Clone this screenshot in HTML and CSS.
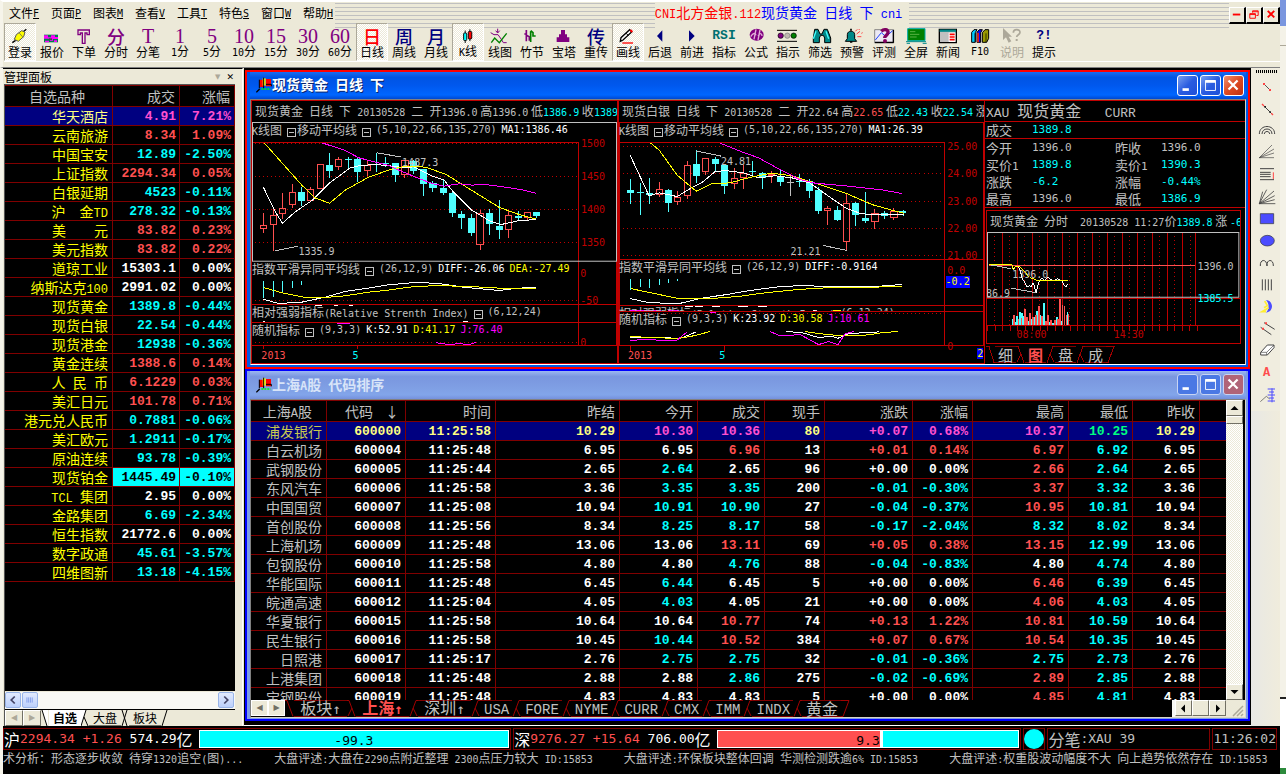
FILE: index.html
```html
<!DOCTYPE html>
<html lang="zh-CN">
<head>
<meta charset="utf-8">
<title>CNI北方金银.112现货黄金 日线 下</title>
<link rel="stylesheet" href="styles.css">
</head>
<body>
<div class="app">
<header class="top">
  <div class="menubar">
    <nav class="menus">
      <button>文件<u>F</u></button><button>页面<u>P</u></button><button>图表<u>M</u></button><button>查看<u>V</u></button><button>工具<u>T</u></button><button>特色<u>S</u></button><button>窗口<u>W</u></button><button>帮助<u>H</u></button>
    </nav>
    <div class="stripes"></div>
    <h1 class="caption"><span class="hot"><span class="n">CNI</span>北方金银<span class="n">.112</span></span>现货黄金<span class="n">&nbsp;</span>日线<span class="n">&nbsp;</span>下<span class="n">&nbsp;cni</span></h1>
    <div class="stripes"></div>
    <div class="childbtns">
      <button aria-label="最小化"><svg viewBox="0 0 15 15"><path d="M3 7h8" stroke="#f00" stroke-width="2"/></svg></button>
      <button aria-label="还原"><svg viewBox="0 0 15 15"><path d="M6 3h6v5h-2M6 3v2M3 6h6v5H3zM3 7h6M6 4h6" fill="none" stroke="#f00"/></svg></button>
      <button aria-label="关闭"><svg viewBox="0 0 15 15"><path d="M4 3l7 7M11 3l-7 7" stroke="#f00" stroke-width="2"/></svg></button>
    </div>
  </div>
  <div class="toolbar">
    <button class="on"><svg viewBox="27 84 72 48"><path d="M40 128l10-7M72 96l10-8" stroke="#000" stroke-width="4"/><path d="M46 118l6-14 16-12 10 4-4 14-16 14z" fill="#ff0" stroke="#555" stroke-width="3"/><path d="M60 98l12 14" stroke="#884" stroke-width="3"/></svg>登录</button>
    <button><svg viewBox="120 82 72 48"><path d="M132 102h42v23h-42z" fill="#00804a"/><path d="M132 104h12v6h9v-6h12v5h9v6h-15v5h-9v-6h-18zM135 120h12v5h-12zM162 119h9v5h-9z" fill="#f0f"/><path d="M147 113h9v5h-9z" fill="#444"/></svg>报价</button>
    <button><svg viewBox="214 82 72 48"><path d="M232 88h34v14h-7v-5h-6v31h-8V97h-6v5h-7z" fill="none" stroke="#800080" stroke-width="4"/></svg>下单</button>
    <button><b class="zi">分</b>分时</button>
    <button><b class="nu">T</b>分笔</button>
    <button><b class="nu">1</b><span><span class="n">1</span>分</span></button>
    <button><b class="nu">5</b><span><span class="n">5</span>分</span></button>
    <button><b class="nu">10</b><span><span class="n">10</span>分</span></button>
    <button><b class="nu">15</b><span><span class="n">15</span>分</span></button>
    <button><b class="nu">30</b><span><span class="n">30</span>分</span></button>
    <button><b class="nu">60</b><span><span class="n">60</span>分</span></button>
    <button class="on"><b class="zi hot">日</b>日线</button>
    <button><b class="zi navy">周</b>周线</button>
    <button><b class="zi navy">月</b>月线</button>
    <button class="on"><svg viewBox="81 84 72 48"><path d="M108 92v40M123 88v38" stroke="#000" stroke-width="3"/><rect x="103" y="100" width="10" height="24" rx="3" fill="#0ff" stroke="#000" stroke-width="3"/><rect x="118" y="95" width="11" height="24" rx="3" fill="#f00" stroke="#000" stroke-width="3"/></svg><span><span class="n">K</span>线</span></button>
    <button><svg viewBox="174 82 72 48"><path d="M182 96l10 6 12 0 10 14 6 10h10" fill="none" stroke="#800080" stroke-width="3"/><path d="M184 126l10-14 14 14 22-28" fill="none" stroke="#008000" stroke-width="4"/><path d="M203 84v12M197 90l6 7 6-7" fill="none" stroke="#800080" stroke-width="3"/></svg>线图</button>
    <button><svg viewBox="270 82 72 48"><path d="M289 88v34M283 100h6M289 104l9 4v12" fill="none" stroke="#800080" stroke-width="5"/><path d="M302 92v32M302 90l7 6v10h8" fill="none" stroke="#008000" stroke-width="5"/></svg>竹节</button>
    <button><svg viewBox="366 82 72 48"><path d="M393 88h12v13h6v9h7v14h-38v-14h7v-9h6z" fill="#800080"/></svg>宝塔</button>
    <button><b class="zi navy">传</b>重传</button>
    <button class="on"><svg viewBox="561 84 72 48"><path d="M574 124l8-4 26-24-6-7-26 24z" fill="#fff" stroke="#000" stroke-width="4"/><path d="M604 90l6 6" stroke="#f00" stroke-width="6"/><path d="M592 100l6 7" stroke="#000" stroke-width="3"/><path d="M580 129h32" stroke="#f00" stroke-width="4"/></svg>画线</button>
    <button><svg viewBox="652 82 72 48"><path d="M695 89v34l-16-17z" fill="#000080"/></svg>后退</button>
    <button><svg viewBox="748 82 72 48"><path d="M775 89v34l17-17z" fill="#000080"/></svg>前进</button>
    <button><b class="rsi">RSI</b>指标</button>
    <button><svg viewBox="942 82 72 48"><ellipse cx="980" cy="102" rx="21" ry="18" fill="#800080"/><path d="M972 116l6-30M984 118l6-30M962 108c8-14 14-10 16-4M984 106c8-12 12-6 12 0" fill="none" stroke="#e0b0d8" stroke-width="4"/></svg>公式</button>
    <button><svg viewBox="1038 82 72 48"><path d="M1041 89h60M1041 122h60" stroke="#000" stroke-width="3"/><circle cx="1052" cy="105" r="8" fill="#800080" stroke="#000" stroke-width="2"/><circle cx="1072" cy="105" r="8" fill="#c0b8b0" stroke="#777" stroke-width="2"/><circle cx="1091" cy="105" r="8" fill="#008000" stroke="#000" stroke-width="2"/></svg>指示</button>
    <button><svg viewBox="1136 82 72 48"><path d="M1156 86h10l6 14h6l6-14h10l10 26v14h-18v-14l-4-8h-8l-4 8v14h-18v-14z" fill="#088" stroke="#000" stroke-width="3"/><path d="M1160 92l-8 22M1190 92l8 22" stroke="#4ff" stroke-width="4"/></svg>筛选</button>
    <button><svg viewBox="1232 82 72 48"><path d="M1248 122h34l-6-8v-12c0-14-22-14-22 0v12z" fill="#088" stroke="#000" stroke-width="3"/><path d="M1265 84v6M1262 124h7" stroke="#000" stroke-width="5"/><path d="M1278 92l6-6M1282 100l10-8M1284 108h12M1288 88l3-3M1296 98l4-2" stroke="#f44" stroke-width="3"/></svg>预警</button>
    <button><svg viewBox="38 82 72 48"><path d="M46 87h57v40H46z" fill="#ece9f4" stroke="#555" stroke-width="2"/><path d="M47 125h55M102 88v38" stroke="#000" stroke-width="4"/><path d="M48 118l18-22 14 12 20-18" fill="none" stroke="#24f" stroke-width="3"/><path d="M66 92c8-8 22-6 20 4s-10 8-10 16" fill="none" stroke="#800060" stroke-width="10"/><circle cx="77" cy="121" r="6" fill="#800060"/></svg>评测</button>
    <button><svg viewBox="132 82 72 48"><path d="M143 84h52v36h-52z" fill="#008000" stroke="#0aa" stroke-width="3"/><path d="M150 93h16M150 101h28M150 109h20" stroke="#8c6" stroke-width="2"/><path d="M138 123h60M150 128h-10M188 128h12" stroke="#088" stroke-width="3"/></svg>全屏</button>
    <button><svg viewBox="226 82 72 48"><path d="M236 86h51v40h-51z" fill="#c0c0c0" stroke="#000" stroke-width="4"/><path d="M237 90h49" stroke="#088" stroke-width="7"/><path d="M264 96h20v28h-20z" fill="#fff"/><path d="M267 101h15M267 109h15M267 117h15" stroke="#f00" stroke-width="5"/></svg>新闻</button>
    <button><svg viewBox="324 82 72 48"><path d="M335 95l7-8h9l-5 9v29h-11z" fill="#0cf" stroke="#000" stroke-width="3"/><path d="M351 95l7-8h9l-5 9v29h-11z" fill="#00f" stroke="#000" stroke-width="3"/><path d="M351 96h6v29h-6z" fill="#c22"/><path d="M367 96l8-9h11v26l-6 12h-13z" fill="#990" stroke="#000" stroke-width="3"/><path d="M378 98v26M345 98v26" stroke="#000" stroke-width="2"/></svg><span class="n">F10</span></button>
    <button disabled><svg viewBox="418 82 72 48"><path d="M427 82v36l9-8 8 16 8-4-8-14h10z" fill="#aca899"/><path d="M458 96c0-12 20-12 20-1 0 8-9 6-10 14" fill="none" stroke="#aca899" stroke-width="5"/><path d="M465 115h6v6h-6z" fill="#aca899"/></svg>说明</button>
    <button><b class="rsi navy">?!</b>提示</button>
  </div>
</header>

<main class="work">
<aside class="panel">
  <div class="panelhead"><h2>管理面板</h2><button class="drop" aria-label="菜单">▼</button><button aria-label="关闭">✕</button></div>
  <div class="watchbox">
  <div class="scrollpane">
  <table class="grid watch">
    <thead><tr><th>自选品种</th><th>成交</th><th>涨幅</th></tr></thead>
    <tbody>
    <tr class="sel m"><td>华天酒店</td><td>4.91</td><td>7.21%</td></tr>
    <tr class="r"><td>云南旅游</td><td>8.34</td><td>1.09%</td></tr>
    <tr class="c"><td>中国宝安</td><td>12.89</td><td>-2.50%</td></tr>
    <tr class="r"><td>上证指数</td><td>2294.34</td><td>0.05%</td></tr>
    <tr class="c"><td>白银延期</td><td>4523</td><td>-0.11%</td></tr>
    <tr class="c"><td>沪　金<span class="n">TD</span></td><td>278.32</td><td>-0.13%</td></tr>
    <tr class="r"><td>美　　元</td><td>83.82</td><td>0.23%</td></tr>
    <tr class="r"><td>美元指数</td><td>83.82</td><td>0.22%</td></tr>
    <tr><td>道琼工业</td><td>15303.1</td><td>0.00%</td></tr>
    <tr><td>纳斯达克<span class="n">100</span></td><td>2991.02</td><td>0.00%</td></tr>
    <tr class="c"><td>现货黄金</td><td>1389.8</td><td>-0.44%</td></tr>
    <tr class="c"><td>现货白银</td><td>22.54</td><td>-0.44%</td></tr>
    <tr class="c"><td>现货港金</td><td>12938</td><td>-0.36%</td></tr>
    <tr class="r"><td>黄金连续</td><td>1388.6</td><td>0.14%</td></tr>
    <tr class="r"><td>人<span class="n">&nbsp;</span>民<span class="n">&nbsp;</span>币</td><td>6.1229</td><td>0.03%</td></tr>
    <tr class="r"><td>美汇日元</td><td>101.78</td><td>0.71%</td></tr>
    <tr class="c"><td>港元兑人民币</td><td>0.7881</td><td>-0.06%</td></tr>
    <tr class="c"><td>美汇欧元</td><td>1.2911</td><td>-0.17%</td></tr>
    <tr class="c"><td>原油连续</td><td>93.78</td><td>-0.39%</td></tr>
    <tr class="flash"><td>现货铂金</td><td>1445.49</td><td>-0.10%</td></tr>
    <tr><td><span class="n">TCL&nbsp;</span>集团</td><td>2.95</td><td>0.00%</td></tr>
    <tr class="c"><td>金路集团</td><td>6.69</td><td>-2.34%</td></tr>
    <tr><td>恒生指数</td><td>21772.6</td><td>0.00%</td></tr>
    <tr class="c"><td>数字政通</td><td>45.61</td><td>-3.57%</td></tr>
    <tr class="c"><td>四维图新</td><td>13.18</td><td>-4.15%</td></tr>
    </tbody>
  </table>
  </div>
  <div class="xpscroll"><button aria-label="左"><svg viewBox="0 0 16 16"><path d="M10 4L6 8l4 4" fill="none" stroke="#446" stroke-width="2"/></svg></button><button class="thumb" aria-label="滑块"><svg viewBox="0 0 16 16"><path d="M4.500 5v6M6.500 5v6M8.500 5v6M10.500 5v6" stroke="#7c98e8"/></svg></button><button class="last" aria-label="右"><svg viewBox="0 0 16 16"><path d="M6 4l4 4-4 4" fill="none" stroke="#446" stroke-width="2"/></svg></button></div>
  <div class="ptabs"><button class="arrow" aria-label="前">◀</button><button class="arrow" aria-label="后">▶</button><svg viewBox="0 0 6 16"><path d="M0 0h6v16H5z" fill="#fff"/><path d="M0 0l5 16" stroke="#000"/></svg><button class="tab on">自选</button><svg viewBox="0 0 8 16"><path d="M0 0h5L0 16z" fill="#fff"/><path d="M5 0L0 16M3 7l4 9" stroke="#000"/></svg><button class="tab">大盘</button><svg viewBox="0 0 8 16"><path d="M6 0L1 16M1 0l5 16" stroke="#000"/></svg><button class="tab">板块</button><svg viewBox="0 0 8 16"><path d="M6 0L1 16" stroke="#000"/></svg></div>
  </div>
</aside>

<section class="mdi">
<article class="win active">
  <div class="titlebar"><svg class="logo" viewBox="18 24 48 48"><path d="M28 32h14v22H28zM48 30h15v22H48z" fill="#f00"/><path d="M38 28h9v22h-9z" fill="#ff0"/><path d="M41 26v32M28 32v26M48 46h16v6" stroke="#000" stroke-width="3" fill="none"/><path d="M34 60h28" stroke="#0f0" stroke-width="5" stroke-dasharray="6 3"/><path d="M19 70l10-10" stroke="#000" stroke-width="4"/></svg><h2>现货黄金&ensp;日线&ensp;下</h2>
    <button class="wb" aria-label="最小化"><svg viewBox="0 0 21 21"><path d="M5 15h7" stroke="#fff" stroke-width="3"/></svg></button><button class="wb" aria-label="最大化"><svg viewBox="0 0 21 21"><path d="M5 5h11v11H5z" fill="none" stroke="#fff"/><path d="M5 6h11" stroke="#fff" stroke-width="3"/></svg></button><button class="wb close" aria-label="关闭"><svg viewBox="0 0 21 21"><path d="M5 5l10 10M15 5L5 15" stroke="#fff" stroke-width="2.500"/></svg></button></div>
  <div class="client charts">
    <section class="chart gold">
      <p class="chead"><span class="z">现货黄金</span> <span class="z">日线</span> <span class="z">下</span> 20130528 <span class="z">二</span> <span class="z">开</span>1396.0<span class="z"> 高</span>1396.0<span class="z"> 低</span><span class="ct">1386.9</span><span class="z"> 收</span><span class="ct">1389.8</span></p>
      <div class="plot">
        <svg viewBox="21 163 1092 720" preserveAspectRatio="xMinYMin meet">
          <g class="axis"><path d="M21 224.500H998V832M21 709.500H1112M21 763.500H1112M21 832.500H1112V163M55.500 832v10M337.500 832v10"/><path class="dots" d="M30 227.500H1000M30 325.500H1000M30 425.500H1000M30 523.500H1000M30 697.500H1000M30 823.500H1000"/></g>
          <rect x="22.500" y="164.500" width="1089" height="415" fill="none" stroke="#c0c0c0" stroke-width="3"/>
          <g class="lab"><text x="1005" y="238">1500</text><text x="1005" y="337">1450</text><text x="1005" y="436">1400</text><text x="1005" y="534">1350</text><text x="1003" y="627">0</text><text x="1003" y="708">-50</text><text x="1003" y="834">0</text></g>
          <g class="up"><path d="M55.500 435v37M55.500 482v13M85.500 422v20M85.500 469v81M112.500 376v45M112.500 436v17M142.500 348v25M142.500 409v11M196.500 358v6M280.500 267v8M280.500 296v12M367.500 278v15M367.500 307v19M478.500 320v10M703.500 426v12M703.500 529v17M787.500 430v14M787.500 486v24M844.500 450v8"/><path d="M46 472h19v10H46zM76 442h19v27H76zM103 421h19v15H103zM133 373h19v36H133zM187 364h19v34H187zM217 289h19v72H217zM271 275h19v21H271zM358 293h19v14H358zM469 277h19v43H469zM694 438h19v91H694zM778 444h19v42H778zM835 433h19v17H835z"/></g>
          <g class="down"><path d="M169.500 358v56M253.500 255v75M310.500 267v36M337.500 268v74M394.500 255v57M421.500 267v30M451.500 285v57M505.500 276v42M535.500 303v81M562.500 340v32M592.500 336v45M619.500 370v77M646.500 430v53M676.500 438v66M730.500 423v78M760.500 396v117M817.500 430v28M871.500 432v18"/><path class="f" d="M159 373h21v26H159zM243 291h21v18H243zM300 273h21v3H300zM327 273h21v39H327zM384 289h21v4H384zM411 285h21v3H411zM441 285h21v36H441zM495 279h21v30H495zM525 305h21v43H525zM552 345h21v15H552zM582 360h21v15H582zM609 375h21v60H609zM636 438h21v12H636zM666 450h21v45H666zM720 435h21v33H720zM750 474h21v12H750zM807 444h21v5H807zM861 432h21v12H861z"/></g>
          <g class="note"><path d="M394 255l74 13M90 548l68-13"/><text x="470" y="296">1487.3</text><text x="160" y="562">1335.9</text></g>
          <g class="lw"><path d="M55 358l35 72 22 36 38-34 50-34 53-53 28-20 34-25 35-8 50-1 40 4 40 5 25-3 55 28 35 11 25 32 56 57 54 33 35 12 55-12 50-3M55 693l45 13 70-4 70-15 60-17 70-10 60-10 70-6 70 1 90 13 100 9 60-7 50-2M210 712h20M265 712h12M312 712h10M55 760h6M652 760h16"/></g>
          <g class="ly"><path d="M58 226l112 126 40 38 43 16 47-39 70-39 60-21 50-12 60 3 60 21 76 47 84 52 60 22 50 13M55 658l55 16 70 14h60l60-5 70-11 60-6 60-9 70-4 90 1 110 6 110 1"/></g>
          <g class="lm"><path d="M232 226l68 22 40 22 90 23 30 14 60 25 40 15 35 8 45-7 40 4 30-3 70 9 50 8 40 10M276 766h38M570 823l40 6 30-3 30 3 20-6"/></g>
          <path class="bars" d="M55.500 639v51M85.500 639v48M112.500 639v33M142.500 639v21M169.500 639v12"/>
          <text class="yr" x="49" y="872">2013</text><text class="mo" x="322" y="872">5</text>
        </svg>
        <div class="legends">
          <p><span>K<span class="z">线图</span></span><button class="fold" aria-label="折叠"></button><span class="z">移动平均线</span><button class="fold" aria-label="折叠"></button><span>(5,10,22,66,135,270)</span><span class="wt">MA1:1386.46</span></p>
          <p><span class="z">指数平滑异同平均线</span><button class="fold" aria-label="折叠"></button><span>(26,12,9)</span><span class="wt">DIFF:-26.06</span><span class="yt">DEA:-27.49</span></p>
          <p><span><span class="z">相对强弱指标</span>(Relative Strenth Index)</span><button class="fold" aria-label="折叠"></button><span>(6,12,24)</span></p>
          <p><span class="z">随机指标</span><button class="fold" aria-label="折叠"></button><span>(9,3,3)</span><span class="wt">K:52.91</span><span class="yt">D:41.17</span><span class="mt">J:76.40</span></p>
        </div>
      </div>
    </section>
    <section class="chart silver">
      <p class="chead"><span class="z">现货白银</span> <span class="z">日线</span> <span class="z">下</span> 20130528 <span class="z">二</span> <span class="z">开</span>22.64<span class="z"> 高</span><span class="rt">22.65</span><span class="z"> 低</span><span class="ct">22.43</span><span class="z"> 收</span><span class="ct">22.54</span><span class="z"> 涨</span></p>
      <div class="plot">
        <svg viewBox="13 163 1092 720" preserveAspectRatio="xMinYMin meet">
          <g class="lab"><text x="995" y="247">25.00</text><text x="995" y="328">24.00</text><text x="995" y="412">23.00</text><text x="995" y="493">22.00</text><text x="995" y="574">21.00</text><text x="995" y="617">0.0</text><text x="995" y="845">0</text></g>
          <g class="axis"><path d="M14.500 163V832M13 164.500H1103M13 224.500H988V832M13 574.500H1103M13 712.500H1103M13 730.500H1103M13 832.500H1103V163M46.500 832v18M328.500 832v18"/><path class="dots" d="M24 236.500H990M24 317.500H990M24 401.500H990M24 481.500H990M24 562.500H990M24 734.500H990"/></g>
          <path d="M990 625h72v34h-72zM1085 838h18v34h-18z" fill="#00f"/><text x="990" y="652" fill="#ff0">-0.2</text><text x="1085" y="866" fill="#ff0">2</text>
          <g class="up"><path d="M133.500 342v24M133.500 379v8M187.500 369v19M187.500 401v10M217.500 281v11M217.500 383v9M271.500 311v12M358.500 300v31M358.500 347v15M385.500 291v25M385.500 328v34M469.500 309v36M637.500 414v7M637.500 428v42M694.500 376v30M694.500 520v27M778.500 423v14M778.500 461v22M835.500 420v10M835.500 449v6"/><path d="M124 366h19v13H124zM178 388h19v13H178zM208 292h19v91H208zM262 271h19v40H262zM349 331h19v16H349zM376 316h19v12H376zM460 321h19v3H460zM628 421h19v7H628zM685 406h19v114H685zM769 437h19v24H769zM826 430h19v19H826z"/></g>
          <g class="down"><path d="M46.500 334v74M76.500 345v95M103.500 330v78M160.500 363v69M244.500 248v97M301.500 268v44M328.500 288v90M412.500 279v48M442.500 312v50M496.500 303v51M553.500 318v39M583.500 335v55M610.500 357v81M667.500 414v45M721.500 402v72M751.500 372v93M808.500 430v23M865.500 426v18"/><path class="f" d="M36 366h21v9H36zM66 372h21v3H66zM93 375h21v6H93zM150 366h21v39H150zM234 288h21v36H234zM291 273h21v15H291zM318 291h21v63H318zM402 309h21v5H402zM432 315h21v15H432zM486 325h21v17H486zM543 340h21v4H543zM573 340h21v29H573zM600 366h21v63H600zM657 426h21v30H657zM711 405h21v36H711zM741 450h21v9H741zM798 436h21v7H798zM852 429h21v5H852z"/></g>
          <g class="note"><path d="M526.500 318v66M516 343.500h21M244 250l74 15M622 532l72 15"/><text x="318" y="293">24.81</text><text x="526" y="560">21.21</text></g>
          <g class="lw"><path d="M46 262l57 122 30-9 54 11 43-26 30-15 40-33 30-4 55 7 45 15 50-6 50 6 53 15 57 40 54 37 46 16 90 3 35-1M46 691l54 12 90 4 70-17 70-10 70-12 80-11 80-5 90 4h120l90-7M210 715h24M240 715h25M292 715h24M370 715h30M428 715h28M46 808h104l45 3 49-20M513 790l47 3 50 15 40-4 18 6 32-14 90-5M592 727h12"/></g>
          <g class="ly"><path d="M108 226l25 21 54 75 57 48 46-22 55-3 55-15 70-14 60 8 70 22 94 31 76 33 60 17 35 9M46 661l144 30h100l80-6 80-11 100-10 100-6 210-2M46 805l54 2 90 4 50-9 45-12M570 790l50 7 60 6 80-3 40-7 48-3M652 727h24"/></g>
          <g class="lm"><path d="M315 226l70 28 45 16 66 36 57 29 47 11 100 9 100 11 60 11M46 727h92M160 727h34M285 733h18M46 817l34-3 105 3 33-27M466 790l29 13 60-4 55 30 30-9 28 9 22-33 25-6"/></g>
          <path class="bars" d="M46.500 633v32M76.500 633v24M103.500 633v27M133.500 633v18M160.500 633v12M187.500 633v5"/>
          <text class="yr" x="40" y="872">2013</text><text class="mo" x="313" y="872">5</text>
        </svg>
        <div class="legends">
          <p><span>K<span class="z">线图</span></span><button class="fold" aria-label="折叠"></button><span class="z">移动平均线</span><button class="fold" aria-label="折叠"></button><span>(5,10,22,66,135,270)</span><span class="wt">MA1:26.39</span></p>
          <p><span class="z">指数平滑异同平均线</span><button class="fold" aria-label="折叠"></button><span>(26,12,9)</span><span class="wt">DIFF:-0.9164</span></p>
          <p class="cut"><span><span class="z">相对强弱指标</span>(Relative Strenth Index)</span><span>(6,12,24)</span></p>
          <p><span class="z">随机指标</span><button class="fold" aria-label="折叠"></button><span>(9,3,3)</span><span class="wt">K:23.92</span><span class="yt">D:30.58</span><span class="mt">J:10.61</span></p>
        </div>
      </div>
    </section>
    <section class="quote">
      <h3><span class="n">XAU </span>现货黄金<span class="n">&nbsp;&nbsp; CURR</span></h3>
      <dl class="deal"><dt>成交</dt><dd class="ct">1389.8</dd></dl>
      <dl><dt>今开</dt><dd>1396.0</dd><dt>昨收</dt><dd>1396.0</dd><dt>买价<span class="n">1</span></dt><dd class="ct">1389.8</dd><dt>卖价<span class="n">1</span></dt><dd class="ct">1390.3</dd><dt>涨跌</dt><dd class="ct">-6.2</dd><dt>涨幅</dt><dd class="ct">-0.44%</dd><dt>最高</dt><dd>1396.0</dd><dt>最低</dt><dd class="ct">1386.9</dd></dl>
      <div class="tick">
        <p class="chead"><span class="z">现货黄金</span> <span class="z">分时</span>&nbsp; 20130528 11:27<span class="z">价</span><span class="ct">1389.8</span><span class="z"> 涨 </span><span class="ct">-6.2</span></p>
        <svg viewBox="17 489 762 333" preserveAspectRatio="xMinYMin meet">
          <g class="axis"><path d="M64.500 490V769M109.500 490V769M154.500 490V769M199.500 490V769M244.500 490V769M289.500 490V769M334.500 490V769M379.500 490V769M424.500 490V769M469.500 490V769M514.500 490V769M559.500 490V769M604.500 490V769M17 688.500H779M17 769.500H779"/><path class="dots" d="M40.500 490V769M85.500 490V769M130.500 490V769M175.500 490V769M220.500 490V769M265.500 490V769M310.500 490V769M355.500 490V769M400.500 490V769M445.500 490V769M490.500 490V769M535.500 490V769M580.500 490V769M628.500 490V769"/><path d="M643.500 490V769M19.500 770v16M42 770v16M64.500 770v16M87 770v16M109.500 770v16M132 770v16M154.500 770v16M177 770v16M199.500 770v16M222 770v16M244.500 770v16M267 770v16M289.500 770v16M312 770v16M334.500 770v16M357 770v16M379.500 770v16M402 770v16M424.500 770v16M447 770v16M469.500 770v16M492 770v16M514.500 770v16M537 770v16M559.500 770v16M582 770v16M604.500 770v16M627 770v16M649.500 770v16"/></g>
          <path d="M22 589.500H642" stroke="#ff5050" stroke-width="3"/>
          <rect x="18.500" y="490.500" width="757" height="195" fill="none" stroke="#c0c0c0" stroke-width="3"/>
          <path d="M95.500 768v-16M101.500 768v-8M107.500 768v-26M116.500 768v-37M122.500 768v-35M128.500 768v-26M134.500 768v-22M143.500 768v-10M149.500 768v-16M158.500 768v-23M167.500 768v-40M176.500 768v-28M188.500 768v-64M203.500 768v-8M215.500 768v-6M227.500 768v-22M233.500 768v-12M241.500 768v-12M259.500 768v-38" stroke="#50ffff" stroke-width="4"/>
          <path d="M98.500 768v-28M112.500 768v-18M120 768v-20M131 768v-46M137.500 768v-22M146.500 768v-34M155.500 768v-24M164.500 768v-30M173.500 768v-56M182.500 768v-26M194.500 768v-12M200.500 768v-30M209.500 768v-14M221.500 768v-14M230.500 768v-18M236.500 768v-78M244.500 768v-58M250.500 768v-56M255.500 768v-28M262 768v-32" stroke="#ff5050" stroke-width="4"/>
          <g class="note"><path d="M28 588l62 12M90 658l75 14"/><text x="93" y="629">1396.0</text><text x="14" y="684">86.9</text><text x="651" y="602">1396.0</text></g>
          <text x="651" y="701" fill="#0ff">1385.5</text>
          <g class="lw"><path d="M95 600l13-10 8 12 6 26 8 10 6 16 8-6 6 8 6-14 4 12 5 18 6-24 5-14 6-6 8 6 10-8 10 6 10 4 8-6 8 2 8 6 6 12 5 4 5-8"/></g>
          <g class="ly"><path d="M22 586h70l4 18 6-11h13l20 21 12 12 18 8h95"/></g>
          <g class="lab"><text x="106" y="808">08:00</text><text x="399" y="808">14:30</text></g>
        </svg>
      </div>
      <div class="qtabs"><svg viewBox="0 0 9 17"><path d="M0 .500h3l5 16h1"/></svg><button>细</button><svg viewBox="0 0 9 17"><path d="M0 .500h2l6 16M1 16L5 8"/></svg><button class="on">图</button><svg viewBox="0 0 9 17"><path d="M9 .500H7l-6 16M8 16L4 8"/></svg><button>盘</button><svg viewBox="0 0 9 17"><path d="M9 .500H7l-6 16M8 16L4 8"/></svg><button>成</button><svg viewBox="0 0 9 17"><path d="M0 .500h8l-6 16H0"/></svg></div>
    </section>
  </div>
</article>

<article class="win idle">
  <div class="titlebar"><svg class="logo" viewBox="18 24 48 48"><path d="M28 32h14v22H28zM48 30h15v22H48z" fill="#f00"/><path d="M38 28h9v22h-9z" fill="#ff0"/><path d="M41 26v32M28 32v26M48 46h16v6" stroke="#000" stroke-width="3" fill="none"/><path d="M34 60h28" stroke="#0f0" stroke-width="5" stroke-dasharray="6 3"/><path d="M19 70l10-10" stroke="#000" stroke-width="4"/></svg><h2>上海<span class="n">A</span>股&ensp;代码排序</h2>
    <button class="wb" aria-label="最小化"><svg viewBox="0 0 21 21"><path d="M5 15h7" stroke="#fff" stroke-width="3"/></svg></button><button class="wb" aria-label="最大化"><svg viewBox="0 0 21 21"><path d="M5 5h11v11H5z" fill="none" stroke="#fff"/><path d="M5 6h11" stroke="#fff" stroke-width="3"/></svg></button><button class="wb close" aria-label="关闭"><svg viewBox="0 0 21 21"><path d="M5 5l10 10M15 5L5 15" stroke="#fff" stroke-width="2.500"/></svg></button></div>
  <div class="client sheet">
    <div class="rows">
      <div class="scrollpane">
      <table class="grid stocks">
        <thead><tr><th>上海<span class="n">A</span>股</th><th>代码<span class="sort">↓</span></th><th>时间</th><th>昨结</th><th>今开</th><th>成交</th><th>现手</th><th>涨跌</th><th>涨幅</th><th>最高</th><th>最低</th><th>昨收</th><th></th></tr></thead>
        <tbody>
        <tr class="sel y"><td>浦发银行</td><td>600000</td><td>11:25:58</td><td>10.29</td><td class="m">10.30</td><td class="m">10.36</td><td>80</td><td class="m">+0.07</td><td class="m">0.68%</td><td class="m">10.37</td><td class="g">10.25</td><td>10.29</td><td></td></tr>
        <tr><td>白云机场</td><td>600004</td><td>11:25:48</td><td>6.95</td><td>6.95</td><td class="r">6.96</td><td>13</td><td class="r">+0.01</td><td class="r">0.14%</td><td class="r">6.97</td><td class="c">6.92</td><td>6.95</td><td></td></tr>
        <tr><td>武钢股份</td><td>600005</td><td>11:25:44</td><td>2.65</td><td class="c">2.64</td><td>2.65</td><td>96</td><td>+0.00</td><td>0.00%</td><td class="r">2.66</td><td class="c">2.64</td><td>2.65</td><td></td></tr>
        <tr><td>东风汽车</td><td>600006</td><td>11:25:58</td><td>3.36</td><td class="c">3.35</td><td class="c">3.35</td><td>200</td><td class="c">-0.01</td><td class="c">-0.30%</td><td class="r">3.37</td><td class="c">3.32</td><td>3.36</td><td></td></tr>
        <tr><td>中国国贸</td><td>600007</td><td>11:25:08</td><td>10.94</td><td class="c">10.91</td><td class="c">10.90</td><td>27</td><td class="c">-0.04</td><td class="c">-0.37%</td><td class="r">10.95</td><td class="c">10.81</td><td>10.94</td><td></td></tr>
        <tr><td>首创股份</td><td>600008</td><td>11:25:56</td><td>8.34</td><td class="c">8.25</td><td class="c">8.17</td><td>58</td><td class="c">-0.17</td><td class="c">-2.04%</td><td class="c">8.32</td><td class="c">8.02</td><td>8.34</td><td></td></tr>
        <tr><td>上海机场</td><td>600009</td><td>11:25:48</td><td>13.06</td><td>13.06</td><td class="r">13.11</td><td>69</td><td class="r">+0.05</td><td class="r">0.38%</td><td class="r">13.15</td><td class="c">12.99</td><td>13.06</td><td></td></tr>
        <tr><td>包钢股份</td><td>600010</td><td>11:25:58</td><td>4.80</td><td>4.80</td><td class="c">4.76</td><td>88</td><td class="c">-0.04</td><td class="c">-0.83%</td><td>4.80</td><td class="c">4.74</td><td>4.80</td><td></td></tr>
        <tr><td>华能国际</td><td>600011</td><td>11:25:48</td><td>6.45</td><td class="c">6.44</td><td>6.45</td><td>5</td><td>+0.00</td><td>0.00%</td><td class="r">6.46</td><td class="c">6.39</td><td>6.45</td><td></td></tr>
        <tr><td>皖通高速</td><td>600012</td><td>11:25:04</td><td>4.05</td><td class="c">4.03</td><td>4.05</td><td>21</td><td>+0.00</td><td>0.00%</td><td class="r">4.06</td><td class="c">4.03</td><td>4.05</td><td></td></tr>
        <tr><td>华夏银行</td><td>600015</td><td>11:25:58</td><td>10.64</td><td>10.64</td><td class="r">10.77</td><td>74</td><td class="r">+0.13</td><td class="r">1.22%</td><td class="r">10.81</td><td class="c">10.59</td><td>10.64</td><td></td></tr>
        <tr><td>民生银行</td><td>600016</td><td>11:25:58</td><td>10.45</td><td class="c">10.44</td><td class="r">10.52</td><td>384</td><td class="r">+0.07</td><td class="r">0.67%</td><td class="r">10.54</td><td class="c">10.35</td><td>10.45</td><td></td></tr>
        <tr><td>日照港</td><td>600017</td><td>11:25:17</td><td>2.76</td><td class="c">2.75</td><td class="c">2.75</td><td>32</td><td class="c">-0.01</td><td class="c">-0.36%</td><td class="c">2.75</td><td class="c">2.73</td><td>2.76</td><td></td></tr>
        <tr><td>上港集团</td><td>600018</td><td>11:25:48</td><td>2.88</td><td>2.88</td><td class="c">2.86</td><td>275</td><td class="c">-0.02</td><td class="c">-0.69%</td><td class="r">2.89</td><td class="c">2.85</td><td>2.88</td><td></td></tr>
        <tr><td>宝钢股份</td><td>600019</td><td>11:25:48</td><td>4.83</td><td>4.83</td><td>4.83</td><td>5</td><td>+0.00</td><td>0.00%</td><td class="r">4.85</td><td class="c">4.81</td><td>4.83</td><td></td></tr>
        </tbody>
      </table>
      </div>
      <div class="vscroll"><button aria-label="上"><svg viewBox="0 0 15 15"><path d="M7.500 5l4 4h-8z"/></svg></button><button class="thumb" aria-label="滑块"></button><button class="last" aria-label="下"><svg viewBox="0 0 15 15"><path d="M7.500 9l4-4h-8z"/></svg></button></div>
    </div>
    <div class="wtabs">
      <button class="arrow" aria-label="前">◀</button><button class="arrow" aria-label="后">▶</button>
      <svg viewBox="0 0 9 17"><path d="M0 .500h2l6 16"/></svg><button class="wide">板块<span class="n">↑</span></button>
      <svg viewBox="0 0 9 17"><path d="M0 .500h2l6 16M1 16L5 8"/></svg><button class="wide on">上海<span class="n">↑</span></button>
      <svg viewBox="0 0 9 17"><path d="M9 .500H7l-6 16M8 16L4 8"/></svg><button class="wide">深圳<span class="n">↑</span></button>
      <svg viewBox="0 0 9 17"><path d="M9 .500H7l-6 16M8 16L4 8"/></svg><button><span class="n">USA</span></button>
      <svg viewBox="0 0 9 17"><path d="M9 .500H7l-6 16M8 16L4 8"/></svg><button><span class="n">FORE</span></button>
      <svg viewBox="0 0 9 17"><path d="M9 .500H7l-6 16M8 16L4 8"/></svg><button><span class="n">NYME</span></button>
      <svg viewBox="0 0 9 17"><path d="M9 .500H7l-6 16M8 16L4 8"/></svg><button><span class="n">CURR</span></button>
      <svg viewBox="0 0 9 17"><path d="M9 .500H7l-6 16M8 16L4 8"/></svg><button><span class="n">CMX</span></button>
      <svg viewBox="0 0 9 17"><path d="M9 .500H7l-6 16M8 16L4 8"/></svg><button><span class="n">IMM</span></button>
      <svg viewBox="0 0 9 17"><path d="M9 .500H7l-6 16M8 16L4 8"/></svg><button><span class="n">INDX</span></button>
      <svg viewBox="0 0 9 17"><path d="M9 .500H7l-6 16M8 16L4 8"/></svg><button>黄金</button>
      <svg viewBox="0 0 9 17"><path d="M0 .500h8l-6 16H0"/></svg>
      <div class="hscroll"><button aria-label="左"><svg viewBox="0 0 15 15"><path d="M5 7.500l4-4v8z"/></svg></button><button aria-label="滑块"></button><button aria-label="右"><svg viewBox="0 0 15 15"><path d="M10 7.500l-4-4v8z"/></svg></button><svg class="grip" viewBox="0 0 17 17"><path d="M6 16L16 6M10 16l6-6M14 16l2-2" stroke="#aca899" stroke-width="1.500"/></svg></div>
    </div>
  </div>
</article>
</section>

<aside class="draw">
  <div class="tools">
  <div class="gripdots"></div>
  <button aria-label="线段"><svg viewBox="825 27 72 66"><path d="M852 51l18 18" stroke="#555" stroke-width="3"/><path d="M849 48h6v6h-6zM867 66h6v6h-6z" fill="#f44"/></svg></button>
  <button aria-label="直线"><svg viewBox="825 93 72 66"><path d="M846 111l33 33" stroke="#444" stroke-width="3"/><path d="M846 111l6 6M874 139l5 5" stroke="#f44" stroke-width="4"/><path d="M853 117h5v5h-5zM868 133h5v5h-5z" fill="#222"/></svg></button>
  <button aria-label="弧线"><svg viewBox="825 159 72 66"><path d="M838 201c0-30 46-30 46 0M846 201c0-20 30-20 30 0M853 201c0-10 16-10 16 0" fill="none" stroke="#444" stroke-width="3"/></svg></button>
  <button aria-label="扇形"><svg viewBox="825 225 72 66"><path d="M838 272l38-38M838 272l44-26M838 272l44-14M838 272h44" stroke="#444" stroke-width="2"/></svg></button>
  <button aria-label="黄金分割"><svg viewBox="825 294 72 66"><path d="M840 308h42M840 319h32M840 325h32M840 332h32M840 341h42" stroke="#444" stroke-width="3"/><path d="M880 319v20" stroke="#f44" stroke-width="3"/></svg></button>
  <button aria-label="速阻线"><svg viewBox="825 357 72 66"><path d="M838 410h48M838 410l46-12M838 410l46-24M838 410l44-38M838 410l22-42M838 410l10-36" stroke="#444" stroke-width="2.500"/></svg></button>
  <button aria-label="矩形"><svg viewBox="825 423 72 66"><path d="M841 440h40v30h-40z" fill="#4c4cff" stroke="#333" stroke-width="2"/></svg></button>
  <button aria-label="椭圆"><svg viewBox="825 489 72 66"><ellipse cx="862" cy="521" rx="21" ry="16" fill="#4c4cff" stroke="#333" stroke-width="2"/></svg></button>
  <button aria-label="周期"><svg viewBox="825 558 72 66"><path d="M841 600c-2-22 20-22 20 0M861 600c-2-22 20-22 19 0" fill="none" stroke="#444" stroke-width="3"/></svg></button>
  <button aria-label="竖线"><svg viewBox="825 621 72 66"><path d="M847 637v33M856 637v33M865 637v33M874 637v33" stroke="#444" stroke-width="3"/></svg></button>
  <button aria-label="月相"><svg viewBox="825 687 72 66"><path d="M858 699c24 2 24 36 0 38 8-8 12-26 0-38z" fill="#4c4cff"/><path d="M854 702l8 14-10 6M866 722l-20 12h12" fill="none" stroke="#fe3" stroke-width="5"/></svg></button>
  <button aria-label="平行线"><svg viewBox="825 756 72 66"><path d="M852 770l32 20M842 784l32 22" stroke="#444" stroke-width="3"/><path d="M855 769h6v6h-6zM846 785h6v6h-6z" fill="#f44"/></svg></button>
  <button aria-label="橡皮"><svg viewBox="825 819 72 66"><path d="M842 856l20-22h20v8l-20 22h-20z" fill="#fff" stroke="#444" stroke-width="3"/><path d="M842 856h18l22-22M860 856v8" fill="none" stroke="#444" stroke-width="2"/></svg></button>
  <button aria-label="文字" class="letter">A</button>
  <button aria-label="标尺"><svg viewBox="1473 50 72 66"><path d="M1489 103l18-16 10 8" fill="none" stroke="#444" stroke-width="2"/><path d="M1524 63v42M1511 65h22M1515 74h15M1511 83h22M1515 92h15M1511 101h22" stroke="#4c4cff" stroke-width="3"/></svg></button>
  </div>
</aside>
</main>

<footer class="bottom">
  <div class="status">
    <div class="seg idx">沪<span class="n rt">2294.34 +1.26</span><span class="n">&nbsp;574.29</span>亿<div class="meter full"><span class="n">-99.3</span></div></div>
    <div class="seg idx">深<span class="n rt">9276.27 +15.64</span><span class="n">&nbsp;706.00</span>亿<div class="meter part"><span class="n">9.3</span></div></div>
    <div class="seg lamp"><i></i></div>
    <div class="seg trade">分笔<span class="n">:XAU 39</span></div>
    <div class="seg"><time class="n">11:26:02</time></div>
  </div>
  <div class="ticker">
    <span>术分析：形态逐步收敛<span class="n">&nbsp;</span>待穿<span class="n">1320</span>追空<span class="n">(</span>图<span class="n">)...</span></span>
    <span>大盘评述<span class="n">:</span>大盘在<span class="n">2290</span>点附近整理<span class="n"> 2300</span>点压力较大<span class="n"> ID:15853</span></span>
    <span>大盘评述<span class="n">:</span>环保板块整体回调<span class="n">&nbsp;</span>华测检测跌逾<span class="n">6% ID:15853</span></span>
    <span>大盘评述<span class="n">:</span>权重股波动幅度不大<span class="n">&nbsp;</span>向上趋势依然存在<span class="n"> ID:15853</span></span>
  </div>
</footer>
</div>
<div class="behind"></div>
</body>
</html>
```

FILE: styles.css
```css
* { box-sizing: border-box; }
body {
  margin: 0;
  height: 100vh;
  display: grid;
  grid-template-columns: 1fr 6px;
  overflow: hidden;
  background: #ece9d8;
  color: #000;
  font: 12px/14px "Noto Sans CJK SC", sans-serif;
}
h1, h2, h3, p, dl, dd { margin: 0; font-weight: normal; }
button { font: inherit; color: inherit; margin: 0; padding: 0; border: 0; background: none; white-space: nowrap; }
svg { display: block; }
.n { font-family: "DejaVu Sans Mono", monospace; font-size: 10px; white-space: pre; }
.hot { color: #f00 !important; }
.navy { color: #000080 !important; }
.rt { color: #ff5050; }
.ct { color: #0ff; }
.wt { color: #fff; }
.yt { color: #ff0; }
.mt { color: #f0f; }

.app { display: flex; flex-direction: column; min-width: 0; min-height: 0; height: 100vh; }
.behind { background: linear-gradient(#7a96df 26px, #f4f2e8 26px 45px, #aca899 45px 46px, #f4f2e8 46px 697px, #222 697px 699px, #fff 699px 768px, #2c8a3c 768px); }

/* menu and toolbar */
.top { border-left: 3px solid #f6f4ea; border-top: 2px solid #fff; padding: 1px 0 5px 1px; }
.menubar { display: flex; height: 20px; align-items: flex-start; }
.menus { display: flex; gap: 12px; padding: 3px 2px 0 5px; }
.menus button { width: 30px; text-align: left; display: flex; }
.menus u { font: 10px/16px "DejaVu Sans Mono", monospace; }
.stripes { flex: 1; height: 25px; background: repeating-linear-gradient(#c0c0c0 0 1px, #ece9d8 1px 4px); }
.caption { color: #00f; font-size: 14px; line-height: 18px; padding-right: 7px; }
.caption .n { font-family: "Liberation Mono", monospace; font-size: 12px; line-height: 12px; }
.childbtns { display: flex; padding-top: 4px; }
.childbtns button { width: 17px; height: 17px; background: #ece9d8; border: 1px solid #fff; border-right: 2px solid #000; border-bottom: 2px solid #000; }
.toolbar { display: flex; border-bottom: 1px solid #fff; }
.toolbar button { width: 32px; height: 38px; padding-top: 4px; display: flex; flex-direction: column; align-items: center; line-height: 14px; border: 1px solid transparent; }
.toolbar svg { width: 24px; height: 16px; margin-bottom: 1px; }
.toolbar b { height: 17px; line-height: 16px; color: #800080; font-weight: normal; }
.toolbar .on { border-color: #aca899 #fff #fff #aca899; background: repeating-conic-gradient(#fff 0 25%, #ece9d8 0 50%) 0 0 / 2px 2px; }
.toolbar .zi { font-size: 18px; font-weight: 500; }
.toolbar .nu { font: 20px/16px "Liberation Serif", serif; height: 17px; }
.toolbar .rsi { font: bold 13px/16px "Liberation Mono", monospace; color: #007070; height: 17px; }
.toolbar button:disabled { color: #aca899; }

/* work area */
.work { flex: 1; min-height: 0; display: flex; border-left: 3px solid #f6f4ea; border-top: 1px solid #808080; }
.panel { width: 240px; border-right: 1px solid #fff; padding: 0 7px 0 1px; display: flex; flex-direction: column; border-top: 1px solid #000; }
.panelhead { display: flex; align-items: center; height: 15px; gap: 6px; padding-right: 1px; }
.panelhead h2 { flex: 1; font-size: 12px; line-height: 14px; }
.panelhead button { font: bold 9px/12px "DejaVu Sans", sans-serif; }
.panelhead .drop { color: #aca899; font-size: 7px; }
.watchbox { flex: 1; min-height: 0; display: flex; flex-direction: column; border-left: 1px solid #555; border-top: 1px solid #555; }
.scrollpane { flex: 1; min-height: 0; min-width: 0; overflow: hidden; background: #000; }

.grid { width: 100%; table-layout: fixed; border-spacing: 0; border-top: 1px solid #800000; background: #000; color: #fff; }
.grid th, .grid td { padding: 0 4px 0 0; height: 19px; text-align: right; border-right: 1px solid #800000; border-bottom: 1px solid #800000; white-space: nowrap; overflow: hidden; line-height: 17px; }
.grid th { height: 21px; color: #c0c0c0; font-weight: normal; font-size: 14px; }
.grid td { font-family: "Liberation Mono", monospace; font-weight: bold; font-size: 13px; }
.grid td:first-child { font-family: "Noto Sans CJK SC", sans-serif; font-weight: normal; font-size: 14px; }
.grid .n { font-family: "Liberation Mono", monospace; font-size: 12px; line-height: 10px; }
.grid .r { color: #ff5050; }
.grid .c { color: #0ff; }
.grid .m { color: #ff50d0; }
.grid .g { color: #00ff80; }
.grid .y { color: #ffff80; }
.grid .sel td { background: #000080; }
.watch th:nth-child(1) { width: 108px; padding-right: 27px; }
.watch th:nth-child(2) { width: 67px; }
.watch td:first-child { color: #ff0; }
.watch .sel td:first-child { color: #ffff80; }
.watch .flash td:not(:first-child) { background: #0ff; color: #000; }
.watch td:not(:first-child) { padding-right: 3px; }

.xpscroll { display: flex; height: 18px; background: #f8f8f4; border-top: 1px solid #ece9d8; }
.xpscroll button { width: 16px; height: 16px; background: linear-gradient(#e1eafe, #bcd0fb); border: 1px solid #98b4e8; border-radius: 2px; margin-right: 1px; }
.xpscroll .last { margin-left: auto; }
.ptabs { display: flex; height: 17px; background: #ece9d8; border-top: 1px solid #000; }
.ptabs svg { height: 16px; flex: none; width: 8px; }
.ptabs .arrow { width: 18px; height: 16px; font: 8px/12px "DejaVu Sans", sans-serif; color: #aca899; border: 1px solid #fff; border-right-color: #716f64; border-bottom-color: #716f64; }
.ptabs .tab { height: 16px; padding: 0 4px; line-height: 12px; border-bottom: 1px solid #716f64; }
.ptabs .on { font-weight: bold; background: #fff; border-bottom: 0; }

/* document windows */
.mdi { flex: 1; min-width: 0; display: flex; flex-direction: column; background: #000; margin-left: 1px; padding: 1px 1px 4px 1px; border-bottom: 1px solid #fff; border-top: 1px solid #000; }
.win { display: flex; flex-direction: column; }
.active { border: 2px solid #f00; background: #0058e6; padding: 0 2px 2px 3px; }
.idle { flex: 1; min-height: 0; border: 2px solid #00f; background: #7d9be6; padding: 0 2px 1px 3px; }
.titlebar { display: flex; align-items: center; height: 27px; padding: 0 2px 1px 6px; }
.active .titlebar { background: linear-gradient(#1a6cf0, #0054e3 20%, #0058ee 50%, #0066ff 85%, #0048d0); }
.idle .titlebar { height: 28px; background: linear-gradient(#9db8f0, #7a96df 20%, #7f9fe4 60%, #82a5ea 85%, #7590dc); }
.titlebar .logo { width: 16px; height: 16px; }
.titlebar h2 { flex: 1; font-size: 14px; font-weight: bold; line-height: 18px; padding-bottom: 2px; color: #fff; text-shadow: 1px 1px #0a246a; }
.idle h2 { color: #d8e4f8; text-shadow: none; }
.titlebar h2 .n { font-size: 12px; font-weight: bold; line-height: 12px; }
.wb { width: 21px; height: 21px; margin-left: 2px; border: 1px solid #fff; border-radius: 3px; background: linear-gradient(135deg, #7aa0f0, #2a5ce0 50%, #1e50d8); }
.wb svg { width: 19px; height: 19px; }
.wb.close { background: linear-gradient(135deg, #f09070, #dd4a22 50%, #c03010); }
.idle .wb { border-color: #c8d4f4; background: #4a78e4; }
.idle .wb.close { background: #b06478; }
.client { background: #000; border: 1px solid #d8d4c4; border-top-color: #808080; border-left-color: #808080; color: #c0c0c0; }
.z { font-family: "Noto Sans CJK SC", sans-serif; font-size: 12px; }

.charts { display: grid; grid-template-columns: 367fr 367fr 260fr; font: 10px/20px "DejaVu Sans Mono", monospace; border-bottom-color: #fff; }
.chart { border: 1px solid #c00000; min-width: 0; overflow: hidden; }
.chead { height: 21px; padding-left: 3px; white-space: nowrap; overflow: hidden; line-height: 19px; }
.plot { display: grid; }
.plot > svg, .legends { grid-area: 1 / 1; }
.plot > svg { width: 100%; height: 241px; }
.legends { display: grid; grid-template-rows: 139px 43px 18px 23px; align-content: start; }
.silver .legends { grid-template-rows: 137px 46px 6px 34px; }
.legends p { display: flex; align-items: flex-start; white-space: nowrap; line-height: 16px; height: 18px; gap: 5px; }
.legends .cut { height: 6px; overflow: hidden; }
.fold { flex: none; width: 9px; height: 9px; margin-top: 6px; border: 1px solid #c0c0c0; background: linear-gradient(#c0c0c0, #c0c0c0) center / 5px 1px no-repeat; }
.fold + .z { margin-left: -4px; }
.charts svg text { font: 30px "DejaVu Sans Mono", monospace; }
.charts svg path { shape-rendering: crispEdges; }
.axis path { fill: none; stroke: #c00000; stroke-width: 3; }
.axis .dots { stroke-dasharray: 3 9; }
.lab text { fill: #c00000; }
.up path { fill: none; stroke: #ff5050; stroke-width: 3; }
.down path { fill: none; stroke: #50ffff; stroke-width: 3; }
.down .f { fill: #50ffff; stroke: none; }
.note path { stroke: #c0c0c0; stroke-width: 3; }
.note text { fill: #c0c0c0; }
.lw path, .ly path, .lm path { fill: none; stroke-width: 3; stroke: #fff; }
.ly path { stroke: #ff0; }
.lm path { stroke: #f0f; }
.bars { stroke: #50ffff; stroke-width: 3; }
.yr { fill: #ff5050; }
.mo { fill: #0ff; }

.quote { border-top: 1px solid #c00000; min-width: 0; overflow: hidden; }
.quote h3 { font: 16px/18px "Noto Sans CJK SC", sans-serif; height: 21px; border-bottom: 1px solid #c00000; padding-left: 1px; white-space: nowrap; }
.quote h3 .n { font-family: "Liberation Mono", monospace; font-size: 13px; }
.quote .n { line-height: 10px; }
.quote dl { display: grid; grid-template-columns: 46px 83px 46px 1fr; font-size: 11px; line-height: 17px; padding-left: 1px; border-bottom: 1px solid #c00000; }
.quote .deal { line-height: 16px; }
.quote dt { font: 13px "Noto Sans CJK SC", sans-serif; line-height: inherit; }
.quote dt .n { font-size: 11px; }
.quote .tick { margin: 2px 4px 2px 1px; border: 1px solid #c00000; }
.tick svg { width: 100%; height: 111px; }
.qtabs { display: flex; padding-left: 1px; }
.qtabs button { font: 15px/14px "Noto Sans CJK SC", sans-serif; height: 17px; width: 21px; border: solid #800000; border-width: 1px 0; }
.qtabs .on { border-top-color: #000; color: #ff5050; font-weight: bold; }
.qtabs svg, .wtabs > svg { width: 9px; height: 17px; flex: none; }
.qtabs path, .wtabs > svg path { fill: none; stroke: #a00000; }

.sheet { flex: 1; min-height: 0; display: flex; flex-direction: column; }
.rows { flex: 1; min-height: 0; display: flex; }
.stocks th:nth-child(1) { width: 76px; padding-right: 14px; }
.stocks th:nth-child(2) { width: 79px; padding-right: 6px; }
.stocks th:nth-child(3) { width: 90px; }
.stocks th:nth-child(4) { width: 124px; }
.stocks th:nth-child(5) { width: 78px; }
.stocks th:nth-child(6) { width: 67px; }
.stocks th:nth-child(7) { width: 60px; }
.stocks th:nth-child(8) { width: 88px; }
.stocks th:nth-child(9) { width: 60px; }
.stocks th:nth-child(10) { width: 96px; }
.stocks th:nth-child(11) { width: 64px; }
.stocks th:nth-child(12) { width: 67px; }
.stocks td:first-child { color: #c0c0c0; }
.stocks .sel td:first-child { color: #c8c850; }
.stocks th:last-child, .stocks td:last-child { border-right: 0; }
.sort { padding-left: 12px; }
.vscroll { width: 17px; margin-right: 2px; display: flex; flex-direction: column; background: repeating-conic-gradient(#fff 0 25%, #ece9d8 0 50%) 0 0 / 2px 2px; }
.vscroll button, .hscroll button { width: 17px; height: 16px; background: #ece9d8; border: 1px solid #fff; border-right-color: #716f64; border-bottom-color: #716f64; flex: none; }
.vscroll .thumb { height: 8px; }
.vscroll .last { margin-top: auto; }
.wtabs { display: flex; height: 17px; white-space: nowrap; }
.wtabs > button { font-size: 16px; line-height: 12px; height: 17px; padding: 0 3px 2px 4px; border: solid #800000; border-width: 1px 0; flex: none; }
.wtabs > .wide { width: 53px; padding: 0 0 2px; }
.wtabs > .on { border-top-color: #000; color: #ff5050; font-weight: bold; }
.wtabs .n { font-family: "Liberation Mono", monospace; font-size: 14px; line-height: 10px; }
.wtabs .wide .n { font-family: "DejaVu Sans Mono", monospace; }
.wtabs > .arrow { width: 17px; height: 16px; background: #ece9d8; font: 8px/12px "DejaVu Sans", sans-serif; color: #716f64; padding: 0; border: 1px solid #fff; }
.hscroll { margin-left: auto; display: flex; background: #ece9d8; border-left: 3px solid #f8f8f4; }
.grip { width: 19px; height: 17px; }

/* drawing tools */
.draw { width: 29px; background: linear-gradient(90deg, #e8e8e4, #f0ecdc); }
.tools { background: #f0eddf; padding: 2px 0 5px 2px; display: flex; flex-direction: column; align-items: center; }
.gripdots { width: 22px; height: 3px; margin-bottom: 3px; background: repeating-linear-gradient(90deg, #000 0 1px, #ece9d8 1px 2px); }
.tools button, .tools svg { width: 24px; height: 22px; }
.tools .letter { font: bold 12px/22px "Liberation Mono", monospace; color: #ff4c4c; }

/* status and ticker */
.bottom { background: #000; color: #c0c0c0; border-left: 3px solid #f6f4ea; padding: 2px 3px 6px 0; }
.status { display: flex; gap: 2px; font-size: 16px; line-height: 20px; }
.status .n { font-size: 13px; }
.seg { border: 1px solid #800000; height: 22px; display: flex; align-items: center; white-space: nowrap; color: #c0c0c0; }
.idx { flex: 1; color: #fff; }
.idx .rt { color: #ff5050; }
.meter { flex: 1; margin-left: 6px; margin-right: 1px; height: 18px; border: 1px solid #fff; color: #000; text-align: center; line-height: 15px; }
.full { background: #0ff; }
.part { background: linear-gradient(90deg, #ff5050 54%, #fff 54% 55%, #0ff 55%); }
.lamp i { width: 20px; height: 20px; border-radius: 50%; background: #0ff; }
.trade { width: 163px; }
.ticker { display: flex; gap: 31px; height: 18px; line-height: 16px; white-space: nowrap; overflow: hidden; }
.ticker > span { flex: none; }
```
